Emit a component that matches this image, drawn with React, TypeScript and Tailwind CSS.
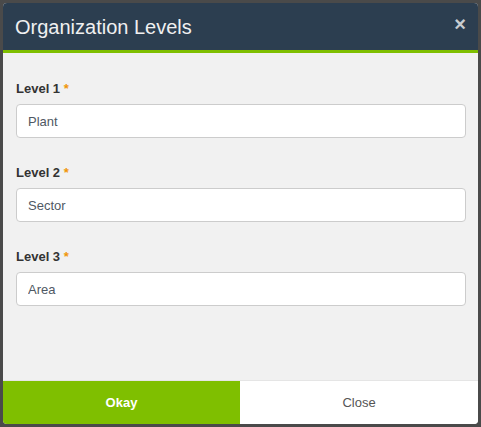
import React from "react";

const levels = [
  { label: "Level 1", value: "Plant" },
  { label: "Level 2", value: "Sector" },
  { label: "Level 3", value: "Area" },
];

export default function App() {
  return (
    <div
      className="w-[481px] h-[427px] bg-[#4a4a4a] p-[3px]"
      style={{ fontFamily: '"Liberation Sans", Arial, sans-serif' }}
    >
      <div className="flex flex-col h-full rounded-[4px] overflow-hidden bg-[#f1f1f1]">
        <div className="h-[50px] shrink-0 bg-[#2c3e50] border-b-[3px] border-[#7fbf00] flex items-center justify-between pl-[12px] pr-[12px]">
          <h2 className="text-[20px] text-[#f0f0f0] leading-none">Organization Levels</h2>
          <button className="text-[20px] font-bold text-[#c8ccd0] leading-none -mt-[5px]">×</button>
        </div>
        <div className="flex-1 pl-[13px] pr-[12px] pt-[27px]">
          {levels.map((l) => (
            <div key={l.label} className="mb-[26px]">
              <label className="block text-[13px] font-bold text-[#333] leading-[18px] mb-[6px]">
                {l.label} <span className="text-[#f0960a]">*</span>
              </label>
              <input
                readOnly
                value={l.value}
                className="block w-full h-[34px] bg-white border border-[#cccccc] rounded-[4px] px-[11px] text-[13px] text-[#4f5863] outline-none"
              />
            </div>
          ))}
        </div>
        <div className="h-[44px] shrink-0 flex border-t border-[#e5e5e5]">
          <button className="w-[237px] bg-[#7fbf00] text-white font-bold text-[13px]">Okay</button>
          <button className="flex-1 bg-white text-[#555] text-[13px]">Close</button>
        </div>
      </div>
    </div>
  );
}
